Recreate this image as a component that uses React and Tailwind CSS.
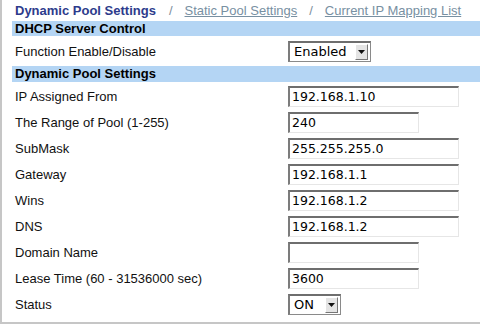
const rows = [
  { label: "IP Assigned From", value: "192.168.1.10", w: "w-[171px]" },
  { label: "The Range of Pool (1-255)", value: "240", w: "w-[131px]" },
  { label: "SubMask", value: "255.255.255.0", w: "w-[171px]" },
  { label: "Gateway", value: "192.168.1.1", w: "w-[171px]" },
  { label: "Wins", value: "192.168.1.2", w: "w-[171px]" },
  { label: "DNS", value: "192.168.1.2", w: "w-[171px]" },
  { label: "Domain Name", value: "", w: "w-[131px]" },
  { label: "Lease Time (60 - 31536000 sec)", value: "3600", w: "w-[131px]" },
];

function TextBox({ value, w }) {
  return (
    <div
      className={`${w} h-[21px] flex items-center pl-[2px] border-t-[2px] border-l-[2px] border-r border-b border-t-[#6e6e6e] border-l-[#7c7c7c] border-r-[#e6e6e6] border-b-[#e6e6e6] bg-white text-[12.5px] text-black font-['DejaVu_Sans',sans-serif]`}
    >
      {value}
    </div>
  );
}

function Select({ value, w }) {
  return (
    <div
      className={`${w} h-[21px] flex items-center justify-between pl-[4px] pr-[2px] border-t-[2px] border-l-[2px] border-r border-b border-t-[#6e6e6e] border-l-[#7c7c7c] border-r-[#8a8a8a] border-b-[#8a8a8a] bg-white text-[13px] text-black font-['DejaVu_Sans',sans-serif]`}
    >
      <span>{value}</span>
      <span className="w-[13px] h-[16px] flex items-center justify-center bg-[#e4e4e4] border-t border-l border-t-white border-l-white border-r border-b border-r-[#777] border-b-[#777]">
        <svg width="7" height="4" viewBox="0 0 7 4">
          <path d="M0 0H7L3.5 4Z" fill="#111" />
        </svg>
      </span>
    </div>
  );
}

function Band({ children, h }) {
  return (
    <div
      className={`ml-[10px] ${h} pl-[3px] flex items-center bg-[#b4d5f4] font-bold text-[13px] text-black`}
    >
      {children}
    </div>
  );
}

export default function App() {
  return (
    <div className="w-[480px] h-[324px] bg-white border-l-[2px] border-[#c6c6c6] font-['Liberation_Sans',Arial,sans-serif] text-[13px] text-[#111] overflow-hidden">
      <div className="h-[21px] pl-[13px] flex items-center whitespace-nowrap">
        <span className="font-bold text-[#2d3b8c]">Dynamic Pool Settings</span>
        <span className="ml-[13px] mr-[12px] text-[#7d8e9c]">/</span>
        <span className="underline text-[#7890a2]">Static Pool Settings</span>
        <span className="ml-[12px] mr-[12px] text-[#7d8e9c]">/</span>
        <span className="underline text-[#7890a2]">Current IP Mapping List</span>
      </div>
      <Band h="h-[15px]">DHCP Server Control</Band>
      <div className="h-[30px] pt-[1px] pl-[13px] flex items-center">
        <div className="w-[273px]">Function Enable/Disable</div>
        <Select value="Enabled" w="w-[83px]" />
      </div>
      <Band h="h-[16px]">Dynamic Pool Settings</Band>
      {rows.map((r) => (
        <div key={r.label} className="h-[26px] pt-[3px] pl-[13px] flex items-center">
          <div className="w-[273px]">{r.label}</div>
          <TextBox value={r.value} w={r.w} />
        </div>
      ))}
      <div className="h-[26px] pt-[3px] pl-[13px] flex items-center">
        <div className="w-[273px]">Status</div>
        <Select value="ON" w="w-[53px]" />
      </div>
      <div className="mt-[6px] border-t-[2px] border-[#c6c6c6]" />
    </div>
  );
}
